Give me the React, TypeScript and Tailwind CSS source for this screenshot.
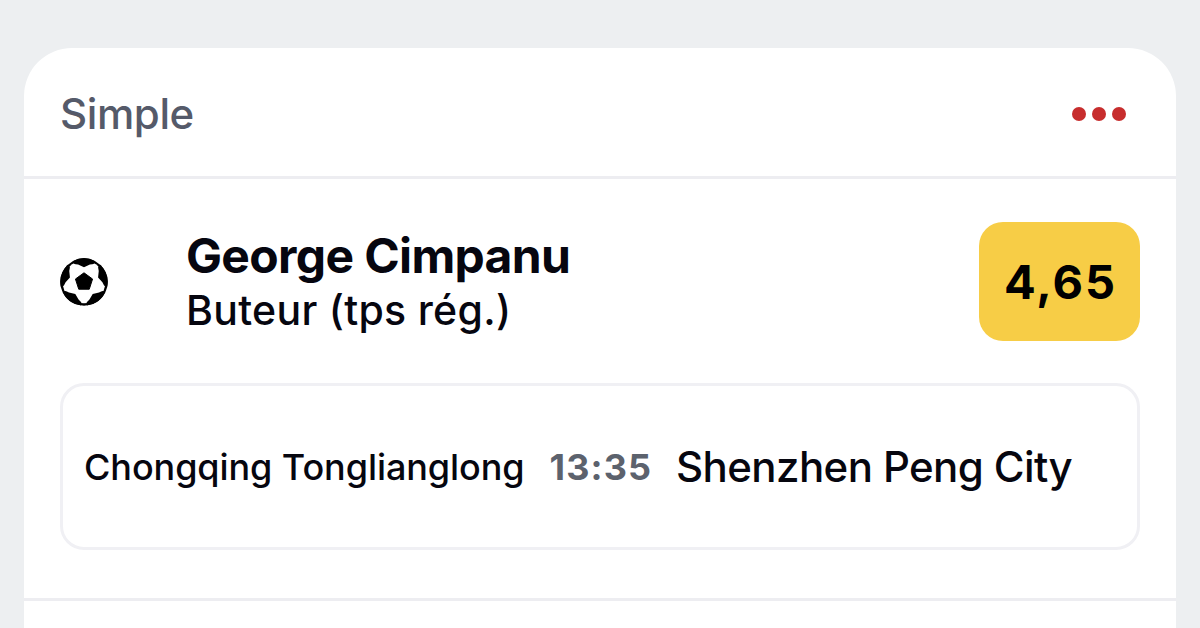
const match = {
  home: 'Chongqing Tonglianglong',
  time: '13:35',
  away: 'Shenzhen Peng City',
}

// one dark patch for each side of the ball
const patches = [0, 72, 144, 216, 288]

const Football = () => (
  <svg viewBox="0 0 146 146" className="size-[48px] shrink-0" aria-hidden="true">
    <circle cx="73" cy="73" r="72" fill="#000" />
    <circle cx="73" cy="73" r="65" fill="#fff" />
    {patches.map((angle) => (
      <path
        key={angle}
        d="M38 10 L42 17 Q44 19 48 19 L55 20 L73 28 L91 20 L98 19 Q102 19 104 17 L108 10 A72 72 0 0 0 38 10Z"
        transform={`rotate(${angle} 73 73)`}
        fill="#000"
      />
    ))}
    <path
      d="M73 45 L99 64 L89 95 L57 95 L47 64Z"
      fill="#000"
      stroke="#000"
      strokeWidth="3"
      strokeLinejoin="round"
    />
  </svg>
)

const App = () => {
  return (
    <main className="h-screen overflow-hidden bg-[#edeff1] px-6 pt-12 font-['Inter',sans-serif] text-[#06060f]">
      <section className="h-[640px] rounded-t-[48px] bg-white">
        {/* HEADER */}
        <header className="flex h-[131px] items-center justify-between border-b-3 border-[#ededf1] pt-[3px] pr-[50px] pl-9">
          <h1 className="text-[42px] leading-none font-medium tracking-[-0.4px] text-[#555a69]">
            Simple
          </h1>
          <button className="flex gap-[6px]" aria-label="Options">
            <span className="size-[14px] rounded-full bg-[#c72d2d]" />
            <span className="size-[14px] rounded-full bg-[#c72d2d]" />
            <span className="size-[14px] rounded-full bg-[#c72d2d]" />
          </button>
        </header>

        <div className="h-[422px] border-b-3 border-[#ededf1] px-9 pt-[43px]">
          {/* SELECTION */}
          <div className="flex h-[119px] items-center">
            <Football />
            <div className="ml-[78px] flex-1 pt-[3px]">
              <h2 className="text-[48px] leading-[54px] font-bold tracking-[-0.65px]">George Cimpanu</h2>
              <p className="text-[41px] leading-[54px] font-medium tracking-[0.3px]">Buteur (tps rég.)</p>
            </div>
            <div className="flex h-full w-[161px] items-center justify-center rounded-[24px] bg-[#f7cd46] pt-px pl-[2px] text-[47px] font-bold tracking-[2px] text-black">
              4,65
            </div>
          </div>

          {/* MATCH */}
          <div className="mt-[42px] flex h-[167px] items-center rounded-[24px] border-3 border-[#f0f0f4] px-[21px] whitespace-nowrap">
            <span className="text-[36px] font-medium tracking-[-0.08px]">{match.home}</span>
            <span className="ml-[25px] text-[36px] font-bold tracking-[1.1px] text-[#5c626d]">{match.time}</span>
            <span className="ml-[24px] text-[42px] font-medium tracking-[-0.6px]">{match.away}</span>
          </div>
        </div>
      </section>
    </main>
  )
}

export default App
